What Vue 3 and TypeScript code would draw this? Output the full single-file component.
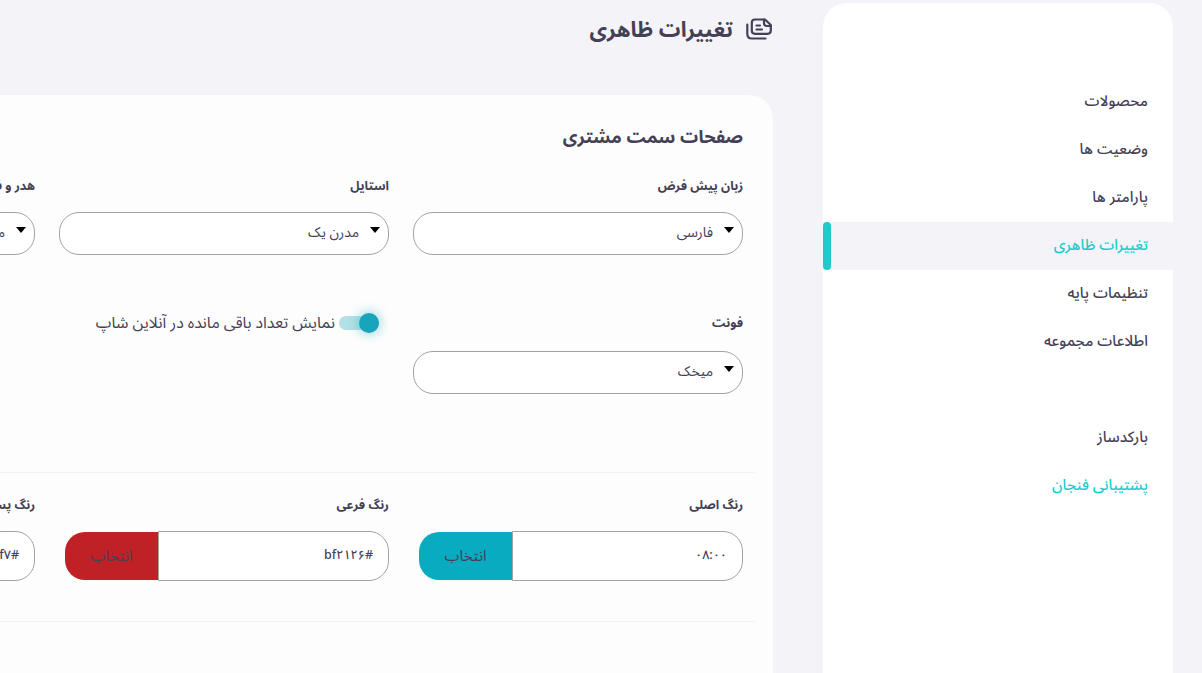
<script setup lang="ts">
const topItems = ['محصولات', 'وضعیت ها', 'پارامتر ها', 'تغییرات ظاهری', 'تنظیمات پایه', 'اطلاعات مجموعه']
const colors = [
  { label: 'رنگ اصلی', value: '۰۸:۰۰', color: '#08abbf' },
  { label: 'رنگ فرعی', value: '#bf۲۱۲۶', color: '#bf2126' },
  { label: 'رنگ پس زمینه', value: '#f۷f۷f۷', color: '#f7f7f7' },
]
</script>

<template>
  <div class="page">
    <aside class="side">
      <nav class="menu">
        <a v-for="item in topItems" :key="item" class="item" :class="{ active: item === 'تغییرات ظاهری' }">{{ item }}</a>
      </nav>
      <nav class="menu lower">
        <a class="item">بارکدساز</a>
        <a class="item accent">پشتیبانی فنجان</a>
      </nav>
    </aside>
    <main class="main">
      <header class="head">
        <svg class="icon" viewBox="0 0 26 22" fill="none" stroke="#444055" stroke-width="2.2" stroke-linecap="round" stroke-linejoin="round">
          <path d="M9 1.500H19L24.800 7V12.500C24.800 14.500 23.500 15.800 21.500 15.800H9C7 15.800 5.800 14.500 5.800 12.500V4.800C5.800 2.800 7 1.500 9 1.500Z" />
          <path d="M18 1.500V5C18 7 19 8 21 8H24.800" />
          <path d="M1.300 6.500V16C1.300 19 2.800 20.500 5.800 20.500H19.500" />
          <path d="M10.500 7.500H14M10.500 11.500H16" />
        </svg>
        <h1>تغییرات ظاهری</h1>
      </header>
      <section class="card">
        <h2>صفحات سمت مشتری</h2>
        <div class="row top">
          <div class="field"><label>زبان پیش فرض</label><div class="select"><span>فارسی</span></div></div>
          <div class="field"><label>استایل</label><div class="select"><span>مدرن یک</span></div></div>
          <div class="field"><label>هدر و فوتر</label><div class="select"><span>مدرن یک</span></div></div>
        </div>
        <div class="row second">
          <div class="field"><label class="font-label">فونت</label><div class="select"><span>میخک</span></div></div>
          <div class="field toggle-field">
            <span class="toggle"><i class="thumb"></i></span>
            <span class="toggle-text">نمایش تعداد باقی مانده در آنلاین شاپ</span>
          </div>
        </div>
        <div class="row colors">
          <div v-for="c in colors" :key="c.label" class="field">
            <label class="color-label">{{ c.label }}</label>
            <div class="color">
              <span class="value">{{ c.value }}</span>
              <button class="pick" :style="{ background: c.color }">انتخاب</button>
            </div>
          </div>
        </div>
      </section>
    </main>
  </div>
</template>

<style>
html, body { margin: 0; background: #f3f3f8; }
</style>

<style scoped>
.page {
  width: 1202px;
  height: 673px;
  overflow: hidden;
  direction: rtl;
  display: flex;
  gap: 50px;
  padding-right: 29px;
  box-sizing: border-box;
  background: #f3f3f8;
  color: #444055;
  font-family: "Noto Sans Arabic", "Noto Sans", sans-serif;
}
.side {
  flex: none;
  width: 350px;
  margin-top: 3px;
  padding-top: 75px;
  height: 700px;
  box-sizing: border-box;
  background: #fff;
  border-radius: 24px 24px 0 0;
}
.menu { display: flex; flex-direction: column; }
.lower { margin-top: 48px; }
.item {
  position: relative;
  height: 48px;
  line-height: 47px;
  padding-right: 25px;
  font-size: 15px;
  font-weight: 500;
}
.active { background: #f3f3f8; color: #1acccc; }
.active::after {
  content: "";
  position: absolute;
  left: 0;
  top: 0;
  bottom: 0;
  width: 8px;
  border-radius: 4px;
  background: #1acccc;
}
.accent { color: #1acccc; }
.main { flex: none; width: 1150px; }
.head {
  height: 95px;
  box-sizing: border-box;
  padding-top: 14px;
  display: flex;
  align-items: flex-start;
  gap: 14px;
}
.icon { width: 26px; height: 22px; margin-top: 4px; margin-right: 1px; flex: none; }
h1 { margin: 0 -1px 0 0; font-size: 21.500px; line-height: 32px; font-weight: 700; }
.card {
  height: 620px;
  box-sizing: border-box;
  padding: 27px 30px 0 18px;
  background: #fdfdfd;
  border-radius: 24px 24px 0 0;
}
h2 { margin: 0; font-size: 18px; line-height: 30px; font-weight: 700; }
.row { display: flex; gap: 24px; margin-right: -12px; padding-right: 12px; }
.top { margin-top: 24px; }
.second { margin-top: 58px; height: 159px; border-bottom: 1px solid #f2f2f5; }
.colors { margin-top: 22px; height: 126px; border-bottom: 1px solid #f2f2f5; }
.field { width: 330px; flex: none; }
label { display: block; font-size: 12.500px; line-height: 20px; font-weight: 700; margin-bottom: 16px; }
.font-label { margin-bottom: 18px; padding-top: 0; }
.color-label { margin-bottom: 16px; }
.select {
  position: relative;
  height: 43px;
  box-sizing: border-box;
  border: 1px solid #a3a3a3;
  border-radius: 20px;
  background: #fff;
  padding-right: 29px;
  font-size: 14px;
  line-height: 40px;
}
.select::before {
  content: "";
  position: absolute;
  right: 8px;
  top: 14px;
  border: 5px solid transparent;
  border-top: 6px solid #000;
  border-bottom: 0;
}
.toggle-field { display: flex; align-items: center; gap: 4px; height: 20px; padding-right: 10px; box-sizing: border-box; }
.toggle {
  position: relative;
  width: 40px;
  height: 14px;
  border-radius: 7px;
  background: #b4e0e7;
  flex: none;
}
.thumb {
  position: absolute;
  right: 0;
  top: -3px;
  width: 20px;
  height: 20px;
  border-radius: 50%;
  background: #18a5bb;
  box-shadow: 0 0 10px 3px rgba(24, 165, 187, .3);
}
.toggle-text { font-size: 15.800px; white-space: nowrap; }
.color { display: flex; height: 50px; }
.value {
  width: 231px;
  box-sizing: border-box;
  border: 1px solid #a3a3a3;
  border-radius: 0 20px 20px 0;
  background: #fff;
  padding-right: 15px;
  line-height: 46px;
  font-size: 12.500px;
  font-weight: 500;
}
.pick {
  width: 93px;
  height: 48px;
  margin-top: 1px;
  border: 0;
  border-radius: 20px 0 0 20px;
  color: #444055;
  font: inherit;
  font-size: 15px;
  padding: 0;
}
</style>
